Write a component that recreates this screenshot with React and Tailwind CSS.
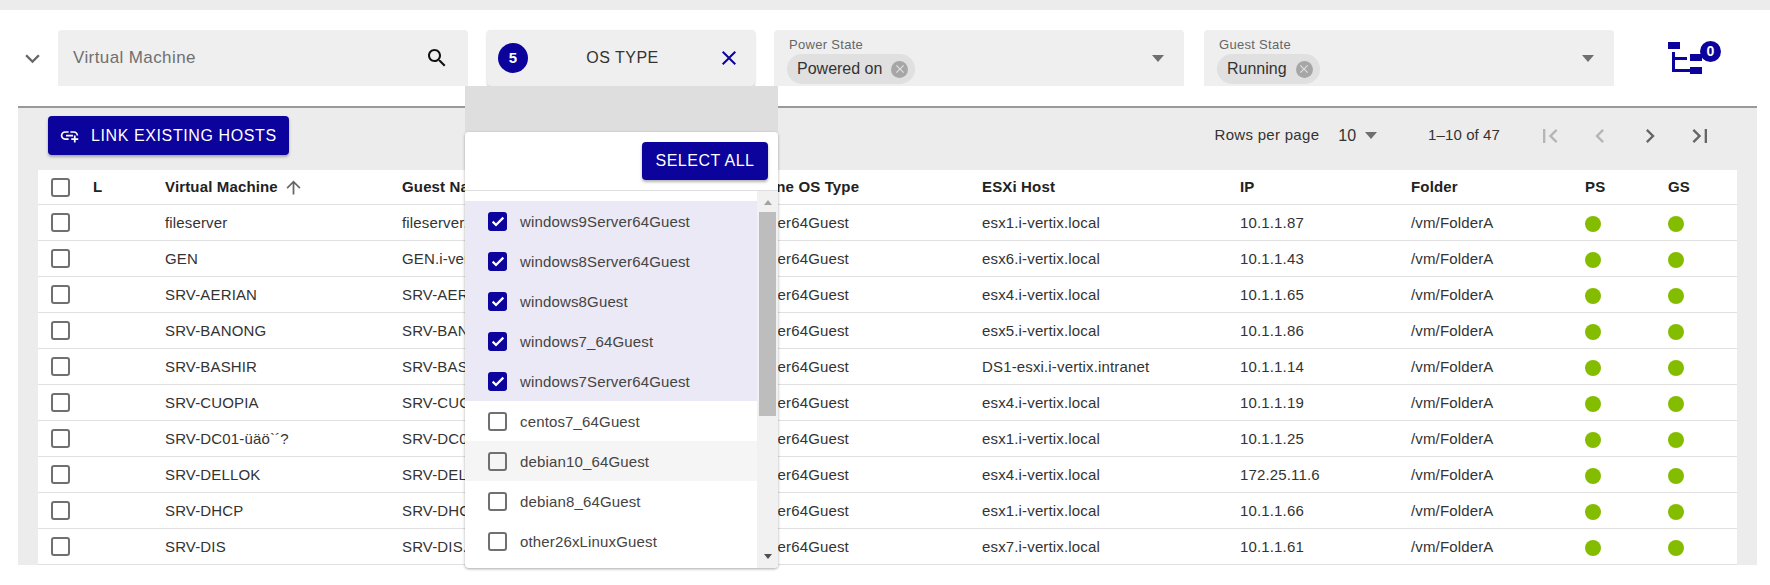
import React from 'react';

const rows = [
  ['fileserver', 'fileserver.i-vertix.local', 'esx1.i-vertix.local', '10.1.1.87'],
  ['GEN', 'GEN.i-vertix.local', 'esx6.i-vertix.local', '10.1.1.43'],
  ['SRV-AERIAN', 'SRV-AERIAN.i-vertix.local', 'esx4.i-vertix.local', '10.1.1.65'],
  ['SRV-BANONG', 'SRV-BANONG.i-vertix.local', 'esx5.i-vertix.local', '10.1.1.86'],
  ['SRV-BASHIR', 'SRV-BASHIR.i-vertix.local', 'DS1-esxi.i-vertix.intranet', '10.1.1.14'],
  ['SRV-CUOPIA', 'SRV-CUOPIA.i-vertix.local', 'esx4.i-vertix.local', '10.1.1.19'],
  ['SRV-DC01-üäö`´?', 'SRV-DC01.i-vertix.local', 'esx1.i-vertix.local', '10.1.1.25'],
  ['SRV-DELLOK', 'SRV-DELLOK.i-vertix.local', 'esx4.i-vertix.local', '172.25.11.6'],
  ['SRV-DHCP', 'SRV-DHCP.i-vertix.local', 'esx1.i-vertix.local', '10.1.1.66'],
  ['SRV-DIS', 'SRV-DIS.i-vertix.local', 'esx7.i-vertix.local', '10.1.1.61'],
];

const options = ['windows9Server64Guest', 'windows8Server64Guest', 'windows8Guest', 'windows7_64Guest', 'windows7Server64Guest', 'centos7_64Guest', 'debian10_64Guest', 'debian8_64Guest', 'other26xLinuxGuest'];

const gridCols = 'grid grid-cols-[55px_72px_237px_280px_300px_258px_171px_174px_83px_69px] items-center';

const Icon = ({ d, size = 24, color = 'currentColor' }) => (
  <svg width={size} height={size} viewBox="0 0 24 24" fill={color} className="shrink-0"><path d={d} /></svg>
);

const Box = ({ checked }) => (
  checked ? (
    <span className="flex w-[19px] h-[19px] items-center justify-center rounded-[3px] bg-[#0c029c]">
      <svg width="16" height="16" viewBox="0 0 24 24" fill="none" stroke="white" strokeWidth="3.4"><path d="M4 13l5 5L20 7" /></svg>
    </span>
  ) : (
    <span className="block w-[19px] h-[19px] rounded-[3px] border-2 border-[#707070]" />
  )
);

const Chip = ({ label }) => (
  <span className="inline-flex items-center h-[30px] pl-[10px] pr-[7px] rounded-full bg-[#e0e0e0] text-[16px] text-[#333]">
    {label}
    <span className="ml-[9px] flex w-[17px] h-[17px] items-center justify-center rounded-full bg-[#a6a6a6]">
      <Icon size={14} color="#e0e0e0" d="M19 6.41L17.59 5 12 10.59 6.41 5 5 6.41 10.59 12 5 17.59 6.41 19 12 13.41 17.59 19 19 17.59 13.41 12z" />
    </span>
  </span>
);

const Caret = () => <span className="block w-0 h-0 border-x-[6px] border-x-transparent border-t-[7px] border-t-[#6f6f6f]" />;

const SelectBox = ({ title, value }) => (
  <div className="w-[410px] h-[56px] rounded-t bg-[#efefef] pl-[13px] pr-[20px] pt-[8px] flex justify-between">
    <div className="flex flex-col items-start">
      <span className="pl-[2px] text-[13px] leading-[14px] tracking-[0.3px] text-[#666]">{title}</span>
      <span className="mt-[2px]"><Chip label={value} /></span>
    </div>
    <span className="mt-[17px] h-[7px] flex"><Caret /></span>
  </div>
);

const App = () => {
  return (
    <div className="relative w-[1770px] h-[585px] bg-white overflow-hidden font-['Liberation_Sans',sans-serif] text-[#212121]">
      <div className="h-[10px] bg-[#ececec]" />

      <div className="flex items-start h-[96px] pt-[20px] pl-[18px]">
        <span className="mt-[14px]"><Icon size={29} color="#666" d="M16.59 8.59L12 13.17 7.41 8.59 6 10l6 6 6-6z" /></span>
        <div className="ml-[11px] w-[410px] h-[56px] rounded-t bg-[#efefef] flex items-center justify-between pl-[15px] pr-[19px] text-[17px] tracking-[0.4px] text-[#6f6f6f]">
          Virtual Machine
          <Icon color="#111" d="M15.5 14h-.79l-.28-.27C15.41 12.59 16 11.11 16 9.5 16 5.91 13.09 3 9.5 3S3 5.91 3 9.5 5.91 16 9.5 16c1.61 0 3.09-.59 4.23-1.57l.27.28v.79l5 4.99L20.49 19l-4.99-5zm-6 0C7.01 14 5 11.99 5 9.5S7.01 5 9.5 5 14 7.01 14 9.5 11.99 14 9.5 14z" />
        </div>
        <div className="ml-[19px] w-[268px] h-[56px] rounded bg-[#efefef] shadow-[0_1px_2px_rgba(0,0,0,0.25)] flex items-center pl-[11px] pr-[14px]">
          <span className="flex w-[30px] h-[30px] items-center justify-center rounded-full bg-[#0c029c] text-white text-[15px] font-bold">5</span>
          <span className="flex-1 text-center text-[16px] tracking-[0.5px] text-[#333]">OS TYPE</span>
          <Icon color="#0c029c" d="M19 6.41L17.59 5 12 10.59 6.41 5 5 6.41 10.59 12 5 17.59 6.41 19 12 13.41 17.59 19 19 17.59 13.41 12z" />
        </div>
        <div className="ml-[19px]"><SelectBox title="Power State" value="Powered on" /></div>
        <div className="ml-[20px]"><SelectBox title="Guest State" value="Running" /></div>
        <div className="relative ml-[54px] mt-[11px] w-[40px] h-[36px]">
          <svg width="34" height="34" viewBox="0 0 34 34" fill="#0c029c">
            <rect x="0" y="1" width="12" height="7" />
            <rect x="4" y="11" width="3" height="20" />
            <rect x="4" y="16" width="15" height="3" />
            <rect x="4" y="28" width="18" height="3" />
            <rect x="22" y="13" width="12" height="7" />
            <rect x="22" y="26" width="12" height="7" />
          </svg>
          <span className="absolute left-[32px] top-0 flex w-[21px] h-[21px] items-center justify-center rounded-full bg-[#0c029c] text-white text-[14px] font-bold">0</span>
        </div>
      </div>

      <div className="ml-[18px] w-[1739px] border-t-2 border-[#9a9a9a] bg-[#ececec] px-[20px]">
        <div className="flex items-start justify-between h-[62px] pt-[8px]">
          <button className="flex items-center ml-[10px] w-[241px] h-[39px] pl-[11px] gap-[11px] rounded bg-[#0c029c] text-white text-[16px] tracking-[0.6px] shadow-[0_2px_3px_rgba(0,0,0,0.3)]">
            <Icon size={21} color="white" d="M8 11h8v2H8v-2zm12.1 1H22c0-2.76-2.24-5-5-5h-4v1.9h4c1.71 0 3.1 1.39 3.1 3.1zM3.9 12c0-1.71 1.39-3.1 3.1-3.1h4V7H7c-2.76 0-5 2.24-5 5s2.24 5 5 5h4v-1.9H7c-1.71 0-3.1-1.39-3.1-3.1zM19 12h-2v3h-3v2h3v3h2v-3h3v-2h-3v-3z" />
            LINK EXISTING HOSTS
          </button>
          <div className="flex items-center h-[39px] text-[15px] text-[#333] mr-[23px]">
            <span className="tracking-[0.3px]">Rows per page</span>
            <span className="ml-[19px] text-[16px]">10</span>
            <span className="ml-[9px]"><Caret /></span>
            <span className="ml-[51px] tracking-[0.1px]">1–10 of 47</span>
            <span className="ml-[36px] flex gap-[22px]">
              <Icon size={28} color="#b5b5b5" d="M18.41 16.59L13.82 12l4.59-4.59L17 6l-6 6 6 6zM6 6h2v12H6z" />
              <Icon size={28} color="#b5b5b5" d="M15.41 7.41L14 6l-6 6 6 6 1.41-1.41L10.83 12z" />
              <Icon size={28} color="#666" d="M10 6L8.59 7.41 13.17 12l-4.58 4.59L10 18l6-6z" />
              <Icon size={28} color="#666" d="M5.59 7.41L10.18 12l-4.59 4.59L7 18l6-6-6-6zM16 6h2v12h-2z" />
            </span>
          </div>
        </div>
        <div className="bg-white text-[15px] tracking-[0.15px]">
          <div className={`${gridCols} h-[35px] border-b border-[#e0e0e0] font-bold text-[#222]`}>
            <span className="pl-[13px]"><Box /></span>
            <span>L</span>
            <span className="flex items-center gap-[5px]">Virtual Machine <Icon size={21} color="#666" d="M4 12l1.41 1.41L11 7.83V20h2V7.83l5.58 5.59L20 12l-8-8-8 8z" /></span>
            <span>Guest Name</span>
            <span className="pl-[51px]">Machine OS Type</span>
            <span>ESXi Host</span>
            <span>IP</span>
            <span>Folder</span>
            <span>PS</span>
            <span>GS</span>
          </div>
          {rows.map((r) => (
            <div key={r[0]} className={`${gridCols} h-[36px] border-b border-[#e0e0e0] text-[#333]`}>
              <span className="pl-[13px]"><Box /></span>
              <span />
              <span className="pt-[2px]">{r[0]}</span>
              <span className="pt-[2px]">{r[1]}</span>
              <span className="pt-[2px] -ml-[3px]">windows9Server64Guest</span>
              <span className="pt-[2px]">{r[2]}</span>
              <span className="pt-[2px]">{r[3]}</span>
              <span className="pt-[2px]">/vm/FolderA</span>
              <span className="block mt-[2px] w-[16px] h-[16px] rounded-full bg-[#84bc00]" />
              <span className="block mt-[2px] w-[16px] h-[16px] rounded-full bg-[#84bc00]" />
            </div>
          ))}
        </div>
      </div>

      <div className="absolute left-[465px] top-[86px] w-[313px] h-[482px] flex flex-col">
        <div className="h-[46px] bg-[#dedede]" />
        <div className="flex-1 flex flex-col bg-white rounded-[4px] shadow-[0_1px_3px_rgba(0,0,0,0.35)] overflow-hidden">
          <div className="h-[59px] shrink-0 flex items-start justify-end border-b border-[#dedede] pt-[10px] pr-[10px]">
            <button className="h-[38px] w-[126px] rounded bg-[#0c029c] text-white text-[16px] tracking-[0.5px] shadow-[0_2px_3px_rgba(0,0,0,0.3)]">SELECT ALL</button>
          </div>
          <div className="flex-1 flex min-h-0">
            <div className="flex-1 pt-[10px] text-[15px] tracking-[0.15px] text-[#444]">
              {options.map((o, i) => (
                <div key={o} className={`h-[40px] flex items-center pl-[23px] gap-[13px] ${i < 5 ? 'bg-[#ebe9f5]' : i === 6 ? 'bg-[#f5f5f5]' : ''}`}>
                  <Box checked={i < 5} />
                  <span className="pt-[2px]">{o}</span>
                </div>
              ))}
            </div>
            <div className="w-[21px] bg-[#f1f1f1] flex flex-col items-center">
              <span className="mt-[9px] w-0 h-0 border-x-[4px] border-x-transparent border-b-[5px] border-b-[#a3a3a3]" />
              <span className="mt-[7px] w-[17px] h-[204px] bg-[#bdbdbd]" />
              <span className="mt-auto mb-[9px] w-0 h-0 border-x-[4px] border-x-transparent border-t-[5px] border-t-[#505050]" />
            </div>
          </div>
        </div>
      </div>
    </div>
  );
};

export default App;
